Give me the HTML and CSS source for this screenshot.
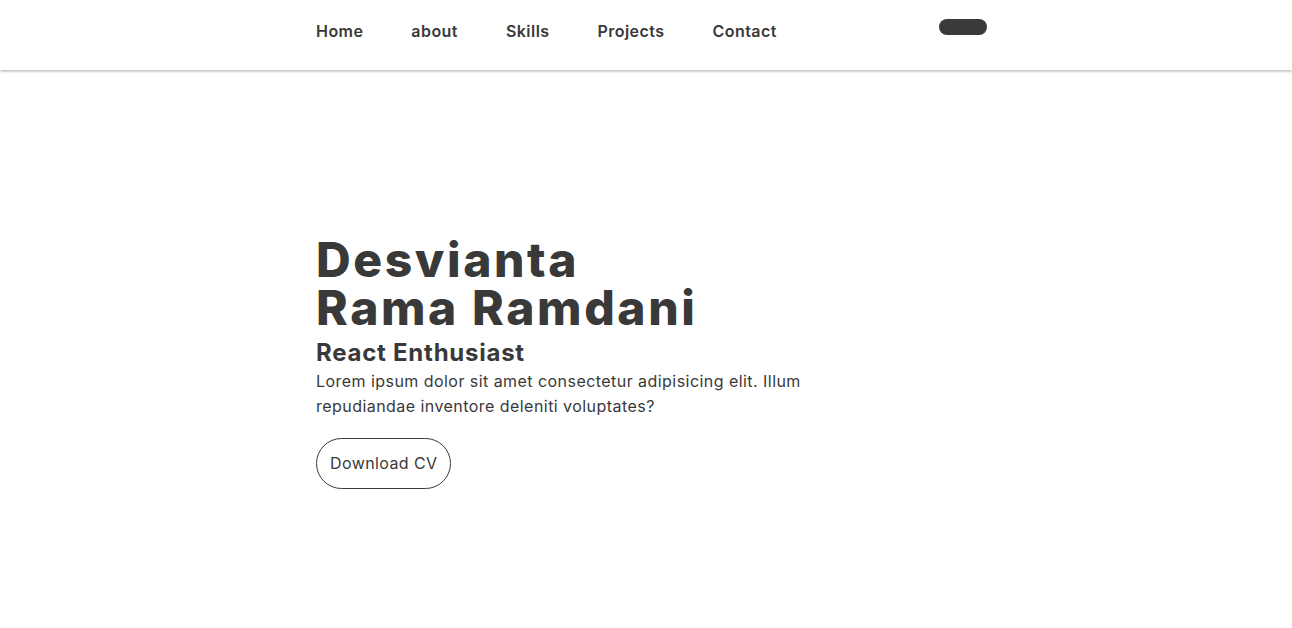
FILE: index.html
```html
<!DOCTYPE html>
<html lang="en">
<head>
<meta charset="utf-8">
<title>Desvianta Rama Ramdani</title>
<link rel="stylesheet" href="styles.css">
</head>
<body>
<header class="site-header">
  <div class="header-inner">
    <nav class="nav">
      <a class="nav-link" href="#home">Home</a>
      <a class="nav-link" href="#about">about</a>
      <a class="nav-link" href="#skills">Skills</a>
      <a class="nav-link" href="#projects">Projects</a>
      <a class="nav-link" href="#contact">Contact</a>
    </nav>
    <button class="toggle" type="button" aria-label="toggle"></button>
  </div>
</header>
<main class="hero">
  <div class="hero-inner">
    <h1 class="hero-name">Desvianta<br>Rama Ramdani</h1>
    <h2 class="hero-role">React Enthusiast</h2>
    <p class="hero-text">Lorem ipsum dolor sit amet consectetur adipisicing elit. Illum repudiandae inventore deleniti voluptates?</p>
    <a class="btn-cv" href="#">Download CV</a>
  </div>
</main>
</body>
</html>
```
FILE: styles.css
```css
* { box-sizing: border-box; }
html, body { margin: 0; padding: 0; }
body {
  font-family: "Inter", "Open Sans", sans-serif;
  color: #393939;
  background: #fff;
}
.site-header {
  height: 70px;
  background: #fff;
  box-shadow: 0 1px 3px rgba(0,0,0,0.35);
}
.header-inner {
  width: 660px;
  margin: 0 auto;
  display: flex;
  align-items: flex-start;
  justify-content: space-between;
}
.nav {
  display: flex;
  gap: 48px;
  padding-top: 20px;
}
.nav-link {
  font-size: 16px;
  font-weight: 600;
  line-height: 22px;
  letter-spacing: 0.45px;
  color: #393939;
  text-decoration: none;
}
.toggle {
  margin-top: 19px;
  margin-right: -11px;
  width: 48px;
  height: 16px;
  border: none;
  border-radius: 8px;
  background: #3a3a3a;
  padding: 0;
}
.hero {
  padding-top: 166px;
}
.hero-inner {
  width: 660px;
  margin: 0 auto;
}
.hero-name {
  margin: 0;
  font-size: 48px;
  font-weight: 800;
  line-height: 48px;
  letter-spacing: 2.6px;
  color: #393939;
}
.hero-role {
  margin: 6px 0 0;
  font-size: 24px;
  font-weight: 700;
  line-height: 30px;
  letter-spacing: 0.75px;
}
.hero-text {
  margin: 1px 0 0;
  width: 510px;
  font-size: 16px;
  line-height: 25px;
  font-weight: 400;
  letter-spacing: 0.45px;
}
.btn-cv {
  display: inline-block;
  margin-top: 19px;
  height: 51px;
  line-height: 49px;
  padding: 0 13px;
  border: 1px solid #393939;
  border-radius: 26px;
  font-size: 16px;
  letter-spacing: 0.4px;
  color: #393939;
  text-decoration: none;
}
```
